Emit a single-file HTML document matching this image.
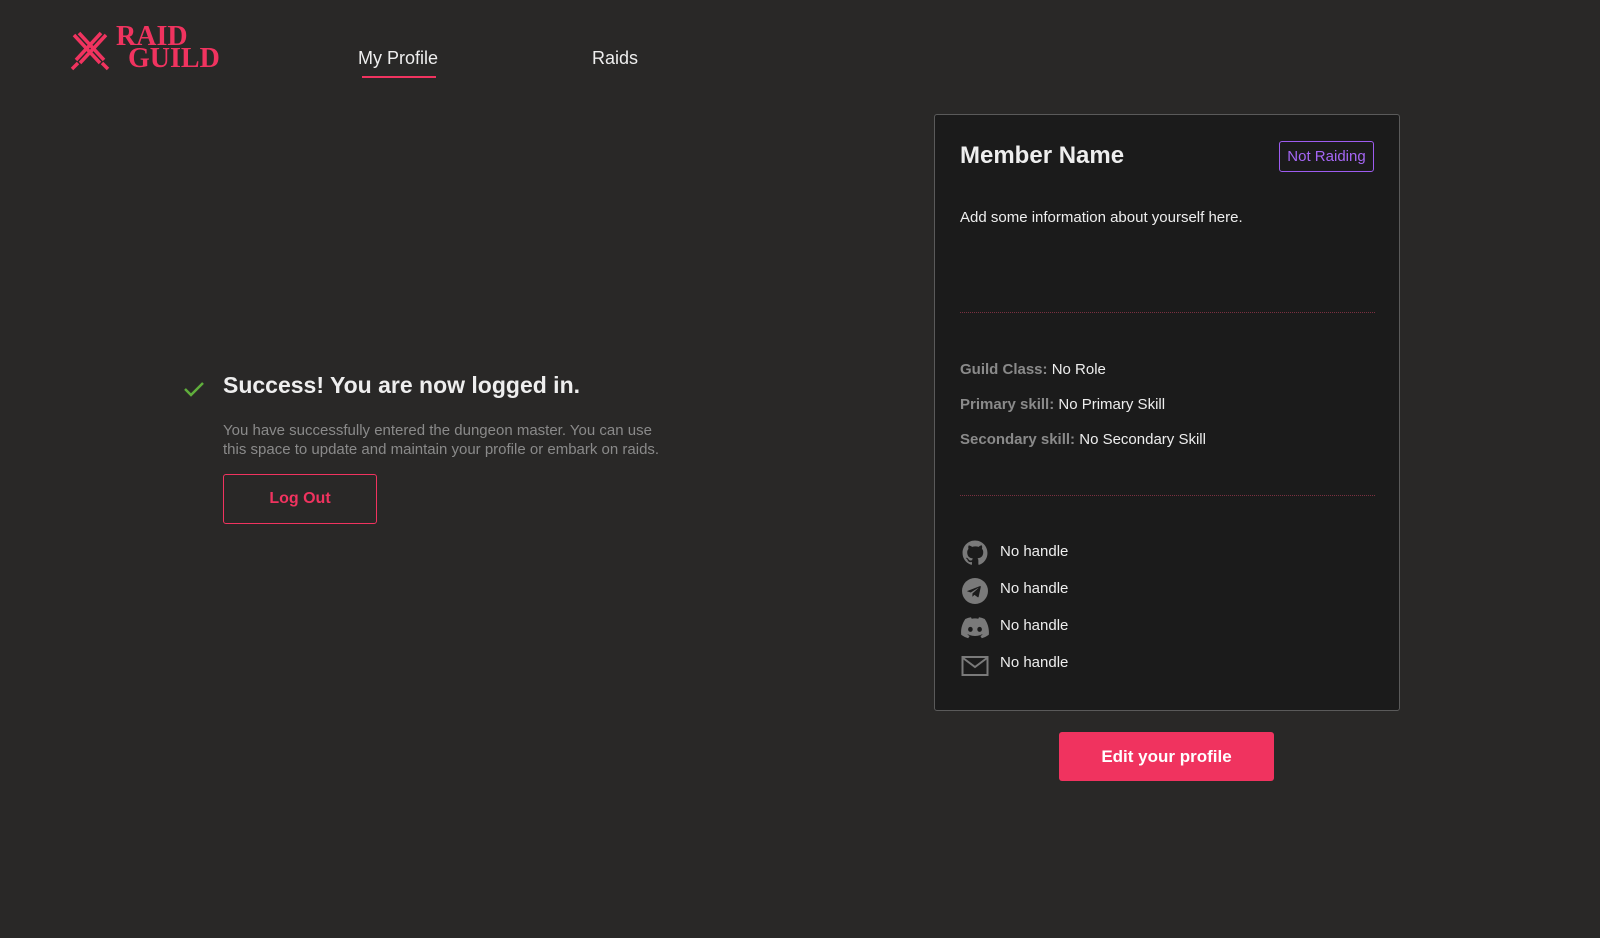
<!DOCTYPE html>
<html><head><meta charset="utf-8"><style>
*{margin:0;padding:0;box-sizing:border-box}
body{width:1600px;height:938px;background:#292827;font-family:"Liberation Sans",sans-serif;color:#eee;position:relative;overflow:hidden}
.abs{position:absolute}
.nav{font-size:18px;color:#eee}
.card{left:934px;top:114px;width:466px;height:597px;background:#1b1b1b;border:1px solid #5a5a5a;border-radius:3px}
.lbl{color:#8a8a8a;font-weight:bold}
.row{font-size:15px;color:#eee}
.h{font-size:15px;color:#eee}
</style></head><body>
<svg class="abs" style="left:70px;top:30px" width="40" height="42" viewBox="0 0 40 40" fill="none" stroke="#f0335f" stroke-width="3.5">
<path d="M4 4 L30 32 M9 2 L34 29"/><path d="M36 4 L10 32 M31 2 L6 29"/><path d="M2 38 L8 32 M38 38 L32 32"/></svg>
<div class="abs" style="left:116px;top:26px;font-family:'Liberation Serif',serif;font-weight:bold;color:#f0335f;font-size:28px;line-height:22px">RAID<br><span style="margin-left:12px">GUILD</span></div>
<div class="abs nav" style="left:358px;top:48px">My Profile</div>
<div class="abs" style="left:362px;top:76px;width:74px;height:2px;background:#f0335f"></div>
<div class="abs nav" style="left:592px;top:48px">Raids</div>
<svg class="abs" style="left:183px;top:380px" width="22" height="18" viewBox="0 0 22 18" fill="none" stroke="#5fae3c" stroke-width="2.5"><path d="M2 9 L8 15 L20 3"/></svg>
<div class="abs" style="left:223px;top:372px;font-size:23px;font-weight:bold;color:#eee">Success! You are now logged in.</div>
<div class="abs" style="left:223px;top:421px;font-size:15px;color:#8a8a8a;line-height:19px;width:440px">You have successfully entered the dungeon master. You can use this space to update and maintain your profile or embark on raids.</div>
<div class="abs" style="left:223px;top:474px;width:154px;height:50px;border:1px solid #f0335f;border-radius:3px;color:#f0335f;font-weight:bold;font-size:16px;text-align:center;line-height:48px">Log Out</div>
<div class="abs card"></div>
<div class="abs" style="left:960px;top:142px;font-size:24px;font-weight:bold;color:#eee">Member Name</div>
<div class="abs" style="left:1279px;top:141px;width:95px;height:31px;border:1px solid #9e5cf0;border-radius:3px;color:#a566f5;font-size:15px;text-align:center;line-height:29px">Not Raiding</div>
<div class="abs h" style="left:960px;top:209px">Add some information about yourself here.</div>
<div class="abs" style="left:960px;top:312px;width:415px;border-top:1px dotted #7a3040"></div>
<div class="abs row" style="left:960px;top:361px"><span class="lbl">Guild Class:</span> No Role</div>
<div class="abs row" style="left:960px;top:396px"><span class="lbl">Primary skill:</span> No Primary Skill</div>
<div class="abs row" style="left:960px;top:431px"><span class="lbl">Secondary skill:</span> No Secondary Skill</div>
<div class="abs" style="left:960px;top:495px;width:415px;border-top:1px dotted #7a3040"></div>
<svg class="abs" style="left:962px;top:540px" width="26" height="26" viewBox="0 0 24 24" fill="#7a7a7a"><path d="M12 .5C5.6.5.5 5.6.5 12c0 5.1 3.3 9.4 7.9 10.9.6.1.8-.3.8-.6v-2c-3.2.7-3.9-1.5-3.9-1.5-.5-1.3-1.3-1.7-1.3-1.7-1-.7.1-.7.1-.7 1.2.1 1.8 1.2 1.8 1.2 1 1.8 2.8 1.3 3.5 1 .1-.8.4-1.3.7-1.6-2.6-.3-5.3-1.3-5.3-5.7 0-1.3.5-2.3 1.2-3.1-.1-.3-.5-1.5.1-3.1 0 0 1-.3 3.3 1.2a11 11 0 016 0C17.3 4.7 18.3 5 18.3 5c.6 1.6.2 2.8.1 3.1.8.8 1.2 1.8 1.2 3.1 0 4.4-2.7 5.4-5.3 5.7.4.4.8 1.1.8 2.2v3.2c0 .3.2.7.8.6A11.5 11.5 0 0023.5 12C23.5 5.6 18.4.5 12 .5z"/></svg>
<div class="abs row" style="left:1000px;top:543px">No handle</div>
<svg class="abs" style="left:962px;top:578px" width="26" height="26" viewBox="0 0 24 24"><circle cx="12" cy="12" r="12" fill="#7a7a7a"/><path d="M5.5 11.8l11-4.3c.5-.2 1 .1.8.9l-1.9 8.8c-.1.6-.5.8-1 .5l-2.9-2.1-1.4 1.3c-.2.2-.3.3-.6.3l.2-3 5.4-4.9c.2-.2 0-.3-.3-.1l-6.7 4.2-2.9-.9c-.6-.2-.6-.6.3-.7z" fill="#1b1b1b"/></svg>
<div class="abs row" style="left:1000px;top:580px">No handle</div>
<svg class="abs" style="left:961px;top:617px" width="28" height="22" viewBox="0 0 28 22"><path d="M23.7 2A23 23 0 0018 .3l-.7 1.4a21 21 0 00-6.6 0L10 .3A23 23 0 004.3 2C.7 7.4-.3 12.6.2 17.8a23 23 0 007 3.5l1.5-2.4a15 15 0 01-2.3-1.1l.6-.4a16.5 16.5 0 0014 0l.6.4a15 15 0 01-2.3 1.1l1.5 2.4a23 23 0 007-3.5c.6-6-1-11.2-4.1-15.8z" fill="#7a7a7a"/><ellipse cx="9.4" cy="12.4" rx="2.3" ry="2.5" fill="#1b1b1b"/><ellipse cx="18.6" cy="12.4" rx="2.3" ry="2.5" fill="#1b1b1b"/></svg>
<div class="abs row" style="left:1000px;top:617px">No handle</div>
<svg class="abs" style="left:961px;top:655px" width="28" height="22" viewBox="0 0 28 22" fill="none" stroke="#7a7a7a" stroke-width="2"><rect x="1.5" y="2" width="25" height="18"/><path d="M2 3l12 9 12-9"/></svg>
<div class="abs row" style="left:1000px;top:654px">No handle</div>
<div class="abs" style="left:1059px;top:732px;width:215px;height:49px;background:#f0335f;border-radius:3px;color:#fff;font-weight:bold;font-size:17px;text-align:center;line-height:49px">Edit your profile</div>
</body></html>
